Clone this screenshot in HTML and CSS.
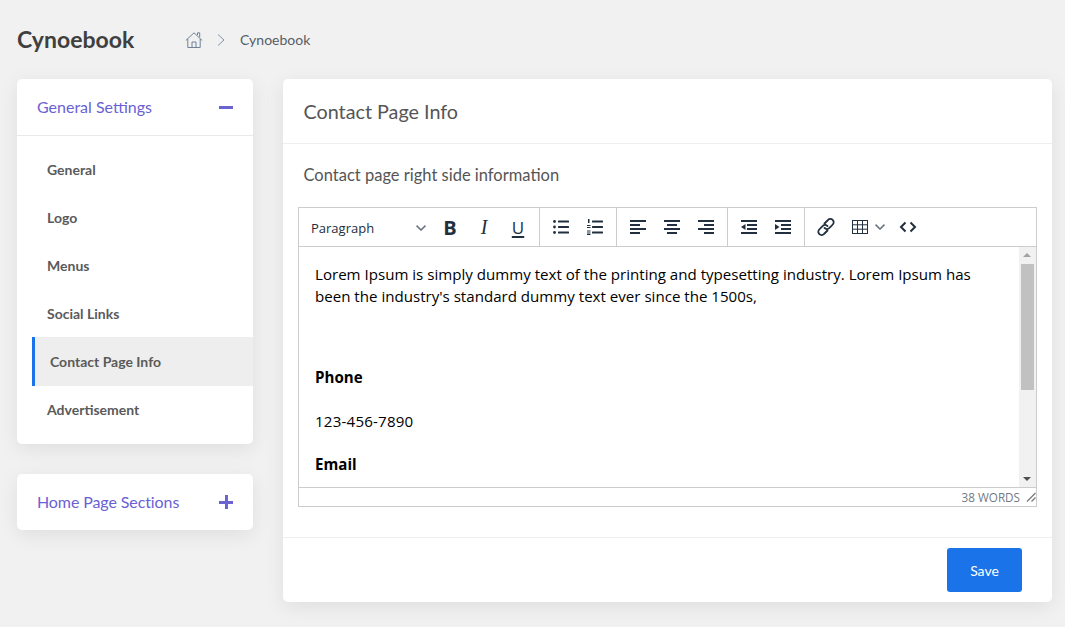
FILE: index.html
```html
<!DOCTYPE html>
<html lang="en">
<head>
    <meta charset="UTF-8">
    <meta name="viewport" content="width=device-width, initial-scale=1.0">
    <title>Contact Page Info</title>
    <link rel="stylesheet" href="styles.css">
</head>
<body>
    <header class="page-header">
        <h1>Cynoebook</h1>
        <nav class="breadcrumb">
            <svg class="home-icon" width="18" height="18" viewBox="0 0 18 18" fill="none" stroke="#6f8296" stroke-width="1">
                <path d="M.8 9.500 9 1.800l8.200 7.700"/>
                <path d="M2.800 8v8.500h12.400V8"/>
                <path d="M7 16.500V11h4v5.500"/>
                <path d="M12.500 4V1.800h2.200v4.400"/>
            </svg>
            <svg class="crumb-sep" width="8" height="14" viewBox="0 0 8 14" fill="none" stroke="#7d96ad" stroke-width="1">
                <path d="M1 1.500 7 7l-6 5.500"/>
            </svg>
            <span>Cynoebook</span>
        </nav>
    </header>

    <div class="layout">
        <aside class="sidebar">
            <section class="card side-card">
                <div class="side-head">
                    <span>General Settings</span>
                    <span class="side-toggle minus"></span>
                </div>
                <ul class="side-nav">
                    <li>General</li>
                    <li>Logo</li>
                    <li>Menus</li>
                    <li>Social Links</li>
                    <li class="active">Contact Page Info</li>
                    <li>Advertisement</li>
                </ul>
            </section>
            <section class="card side-card">
                <div class="side-head closed">
                    <span>Home Page Sections</span>
                    <span class="side-toggle plus"></span>
                </div>
            </section>
        </aside>

        <main class="card main-card">
            <h2 class="main-title">Contact Page Info</h2>
            <div class="main-body">
                <h3 class="field-label">Contact page right side information</h3>
                <div class="editor">
                    <div class="toolbar">
                        <div class="tool-group first">
                            <div class="format-select">
                                <span>Paragraph</span>
                                <svg width="10" height="6" viewBox="0 0 10 6" fill="none" stroke="#6b7480" stroke-width="1.600"><path d="M.5.700 5 5 9.500.700"/></svg>
                            </div>
                            <button class="tool tool-b">B</button>
                            <button class="tool tool-i">I</button>
                            <button class="tool tool-u">U</button>
                        </div>
                        <div class="tool-group">
                            <button class="tool">
                                <svg width="24" height="24" viewBox="0 0 24 24" fill="#222f3e">
                                    <circle cx="5.500" cy="6.500" r="1.400"/><circle cx="5.500" cy="12" r="1.400"/><circle cx="5.500" cy="17.500" r="1.400"/>
                                    <rect x="9" y="5.500" width="11" height="2" rx=".5"/><rect x="9" y="11" width="11" height="2" rx=".5"/><rect x="9" y="16.500" width="11" height="2" rx=".5"/>
                                </svg>
                            </button>
                            <button class="tool">
                                <svg width="24" height="24" viewBox="0 0 24 24" fill="#222f3e">
                                    <rect x="5" y="4" width="1.500" height="4"/><rect x="4" y="10" width="3.500" height="1"/><rect x="4" y="12" width="3.500" height="1"/><rect x="4" y="15.500" width="3.500" height="1"/><rect x="4" y="17.500" width="3.500" height="1"/><rect x="4" y="19" width="3.500" height="1"/>
                                    <rect x="9" y="5.500" width="11" height="2" rx=".5"/><rect x="9" y="11" width="11" height="2" rx=".5"/><rect x="9" y="16.500" width="11" height="2" rx=".5"/>
                                </svg>
                            </button>
                        </div>
                        <div class="tool-group">
                            <button class="tool">
                                <svg width="24" height="24" viewBox="0 0 24 24" fill="#222f3e">
                                    <rect x="4" y="5" width="16" height="2"/><rect x="4" y="9" width="10" height="2"/><rect x="4" y="13" width="16" height="2"/><rect x="4" y="17" width="10" height="2"/>
                                </svg>
                            </button>
                            <button class="tool">
                                <svg width="24" height="24" viewBox="0 0 24 24" fill="#222f3e">
                                    <rect x="4" y="5" width="16" height="2"/><rect x="7" y="9" width="10" height="2"/><rect x="4" y="13" width="16" height="2"/><rect x="7" y="17" width="10" height="2"/>
                                </svg>
                            </button>
                            <button class="tool">
                                <svg width="24" height="24" viewBox="0 0 24 24" fill="#222f3e">
                                    <rect x="4" y="5" width="16" height="2"/><rect x="10" y="9" width="10" height="2"/><rect x="4" y="13" width="16" height="2"/><rect x="10" y="17" width="10" height="2"/>
                                </svg>
                            </button>
                        </div>
                        <div class="tool-group">
                            <button class="tool">
                                <svg width="24" height="24" viewBox="0 0 24 24" fill="#222f3e">
                                    <rect x="4" y="5" width="16" height="2"/><rect x="10" y="9" width="10" height="2"/><rect x="10" y="13" width="10" height="2"/><rect x="4" y="17" width="16" height="2"/>
                                    <path d="M8.500 9v6L4 12z"/>
                                </svg>
                            </button>
                            <button class="tool">
                                <svg width="24" height="24" viewBox="0 0 24 24" fill="#222f3e">
                                    <rect x="4" y="5" width="16" height="2"/><rect x="10" y="9" width="10" height="2"/><rect x="10" y="13" width="10" height="2"/><rect x="4" y="17" width="16" height="2"/>
                                    <path d="M4 9v6l4.500-3z"/>
                                </svg>
                            </button>
                        </div>
                        <div class="tool-group last">
                            <button class="tool">
                                <svg width="24" height="24" viewBox="0 0 24 24" fill="none" stroke="#222f3e" stroke-width="1.800" stroke-linecap="round">
                                    <path d="M10.500 8.500 14 5a3.200 3.200 0 0 1 4.800 4.500l-3.600 3.700a3.200 3.200 0 0 1-4.700-.3"/>
                                    <path d="M13.500 15.500 10 19a3.200 3.200 0 0 1-4.800-4.500l3.600-3.700a3.200 3.200 0 0 1 4.700.3"/>
                                </svg>
                            </button>
                            <button class="tool tool-split">
                                <svg width="24" height="24" viewBox="0 0 24 24" fill="none" stroke="#222f3e" stroke-width="1">
                                    <rect x="4.500" y="5.500" width="15" height="13"/>
                                    <path d="M4.500 9.800h15M4.500 14.200h15M9.500 5.500v13M14.500 5.500v13"/>
                                </svg>
                                <svg class="split-arrow" width="10" height="6" viewBox="0 0 10 6" fill="none" stroke="#6b7480" stroke-width="1.600"><path d="M.5.700 5 5 9.500.700"/></svg>
                            </button>
                            <button class="tool">
                                <svg width="24" height="24" viewBox="0 0 24 24" fill="none" stroke="#222f3e" stroke-width="2">
                                    <path d="M9.500 7.500 5 12l4.500 4.500M14.500 7.500 19 12l-4.500 4.500"/>
                                </svg>
                            </button>
                        </div>
                    </div>

                    <div class="edit-area">
                        <div class="edit-content">
                            <p>Lorem Ipsum is simply dummy text of the printing and typesetting industry. Lorem Ipsum has been the industry's standard dummy text ever since the 1500s,</p>
                            <p class="blank">&nbsp;</p>
                            <p><strong>Phone</strong></p>
                            <p class="digits">123-456-7890</p>
                            <p><strong>Email</strong></p>
                        </div>
                        <div class="scrollbar">
                            <span class="arrow up"></span>
                            <div class="track"><div class="thumb"></div></div>
                            <span class="arrow down"></span>
                        </div>
                    </div>

                    <div class="statusbar">
                        <span>38 WORDS</span>
                        <svg width="10" height="10" viewBox="0 0 10 10" fill="none" stroke="#777" stroke-width="1.200"><path d="M1 9.500 9.500 1M5.500 9.500l4-4"/></svg>
                    </div>
                </div>
            </div>
            <div class="main-footer">
                <button class="btn-save">Save</button>
            </div>
        </main>
    </div>
</body>
</html>
```

FILE: styles.css
```css
* {
    box-sizing: border-box;
}
body {
    font-family: Lato, sans-serif;
    margin: 0;
    padding: 0 13px 25px 17px;
    background-color: #f1f1f1;
    color: #444;
}
.page-header {
    display: flex;
    align-items: center;
    height: 79px;
}
h1 {
    margin: 0 0 2px;
    width: 168px;
    font-size: 23px;
    font-weight: 700;
    color: #3f3f3f;
}
.breadcrumb {
    display: flex;
    align-items: center;
    font-size: 14px;
    color: #555d66;
}
.crumb-sep {
    margin: 0 15px 0 14px;
}
.layout {
    display: flex;
    gap: 30px;
    align-items: flex-start;
}
.card {
    background: #fff;
    border-radius: 5px;
    box-shadow: 0 5px 20px rgba(0, 0, 0, 0.08);
}
.sidebar {
    width: 236px;
    flex: none;
    display: flex;
    flex-direction: column;
    gap: 30px;
}
.side-head {
    display: flex;
    align-items: center;
    justify-content: space-between;
    height: 57px;
    padding: 0 20px 2px;
    font-size: 16px;
    color: #6a5fd3;
    border-bottom: 1px solid #e9e9e9;
}
.side-head.closed {
    height: 56px;
    border-bottom: 0;
    letter-spacing: -0.1px;
}
.side-toggle {
    position: relative;
    top: 1px;
    width: 14px;
    height: 3px;
    background: #6a63d0;
}
.side-toggle.plus::after {
    content: "";
    position: absolute;
    left: 5.5px;
    top: -5.5px;
    width: 3px;
    height: 14px;
    background: #6a63d0;
}
.side-nav {
    list-style: none;
    margin: 0;
    padding: 10px 0 10px 15px;
}
.side-nav li {
    height: 48px;
    line-height: 48px;
    padding-left: 15px;
    font-size: 14px;
    font-weight: 700;
    color: #5a5a5a;
}
.side-nav li.active {
    height: 49px;
    line-height: 50px;
    margin-top: -1px;
    background: #eee;
    border-left: 3px solid #1a73e8;
}
.main-card {
    flex: 1;
    min-width: 0;
}
.main-title {
    margin: 0;
    height: 65px;
    line-height: 65px;
    padding-left: 20.5px;
    font-size: 19.75px;
    font-weight: 400;
    color: #555;
    border-bottom: 1px solid #eee;
}
.main-body {
    padding: 20px 15px 30px;
}
.field-label {
    margin: 0 0 21px 5.5px;
    height: 22px;
    line-height: 22px;
    font-size: 16.5px;
    font-weight: 400;
    color: #555;
}
.editor {
    height: 300px;
    display: flex;
    flex-direction: column;
    border: 1px solid #ccc;
    font-family: "Open Sans", sans-serif;
    color: #222f3e;
}
.toolbar {
    display: flex;
    height: 39px;
    flex: none;
    border-bottom: 1px solid #ccc;
}
.tool-group {
    display: flex;
    align-items: center;
    padding: 0 4px;
    border-right: 1px solid #ccc;
}
.tool-group.first {
    padding-left: 0;
}
.tool-group.last {
    border-right: 0;
}
.format-select {
    width: 134px;
    display: flex;
    align-items: center;
    justify-content: space-between;
    padding: 1px 7px 0 12px;
    font-size: 13px;
}
.tool {
    width: 34px;
    height: 34px;
    flex: none;
    display: flex;
    align-items: center;
    justify-content: center;
    padding: 0;
    border: 0;
    background: none;
    color: #222f3e;
}
.tool-b {
    font: 700 20px "Open Sans", sans-serif;
}
.tool-i {
    font: italic 400 20px "Liberation Serif", serif;
}
.tool-u {
    font: 400 17px "Open Sans", sans-serif;
    text-decoration: underline;
    text-decoration-thickness: 2px;
    text-underline-offset: 2px;
}
.tool-split {
    width: 48px;
    justify-content: flex-start;
    padding-left: 5px;
}
.split-arrow {
    margin-left: 3px;
}
.edit-area {
    flex: 1;
    min-height: 0;
    display: flex;
    overflow: hidden;
    border-bottom: 1px solid #ccc;
}
.edit-content {
    flex: 1;
    min-width: 0;
    overflow: hidden;
    padding: 16px 20px 0 16px;
    font-size: 15.1px;
    line-height: 22px;
    color: #000;
}
.edit-content p {
    margin: 0 0 21.5px;
}
.edit-content p.blank {
    margin-bottom: 15.5px;
}
.edit-content p.digits {
    letter-spacing: 0.2px;
}
.scrollbar {
    width: 17px;
    flex: none;
    display: flex;
    flex-direction: column;
    background: #f1f1f1;
}
.arrow {
    height: 17px;
    flex: none;
    position: relative;
}
.arrow::after {
    content: "";
    position: absolute;
    left: 4px;
    border-left: 4px solid transparent;
    border-right: 4px solid transparent;
}
.arrow.up::after {
    top: 6px;
    border-bottom: 4px solid #a3a3a3;
}
.arrow.down::after {
    top: 7px;
    border-top: 4px solid #505050;
}
.track {
    flex: 1;
    padding: 0 2px;
}
.thumb {
    height: 126px;
    background: #c1c1c1;
}
.statusbar {
    height: 18px;
    flex: none;
    display: flex;
    align-items: center;
    justify-content: flex-end;
    gap: 6px;
    padding-right: 0;
    font-size: 11.7px;
    color: #6f7a85;
}
.main-footer {
    display: flex;
    justify-content: flex-end;
    padding: 10px 30px;
    border-top: 1px solid #eee;
}
.btn-save {
    width: 75px;
    height: 44px;
    border: 0;
    border-radius: 3px;
    background: #1a73e8;
    color: #fff;
    font-family: Lato, sans-serif;
    font-size: 14px;
}
```
